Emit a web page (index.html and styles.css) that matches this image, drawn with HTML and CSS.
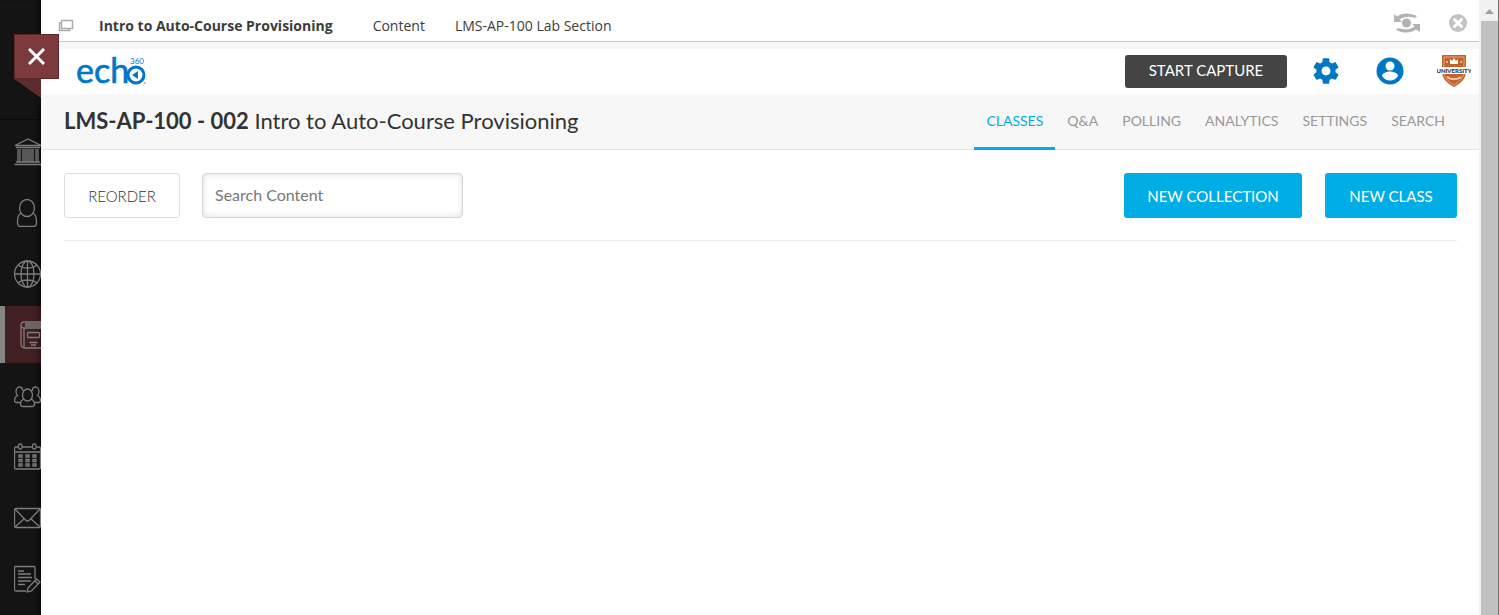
FILE: index.html
```html
<!DOCTYPE html>
<html lang="en">
<head>
    <meta charset="UTF-8">
    <meta name="viewport" content="width=device-width, initial-scale=1.0">
    <title>Intro to Auto-Course Provisioning</title>
    <link rel="stylesheet" href="styles.css">
</head>
<body>
    <nav class="sidebar" aria-label="Main">
        <div class="sidebar-top"></div>
        <a href="#" class="side-link" aria-label="Institution">
            <svg width="28" height="28" viewBox="0 0 28 28">
                <path d="M1 7.500 14 1l13 6.500zM2 9.500h24M4 11v13M6 11v13M9 11v13M11 11v13M13 11v13M15 11v13M17 11v13M19 11v13M22 11v13M24 11v13M2 24h24M.5 26.500h27"/>
            </svg>
        </a>
        <a href="#" class="side-link" aria-label="Profile">
            <svg width="28" height="28" viewBox="0 0 28 28">
                <ellipse cx="13" cy="9" rx="7.500" ry="8.500"/>
                <path d="M7 14c-2 1-3.500 5-3.500 9 0 3 1 4.500 3 4.500h13c2 0 3-1.500 3-4.500 0-4-1.500-8-3.500-9"/>
            </svg>
        </a>
        <a href="#" class="side-link" aria-label="Activity">
            <svg width="28" height="28" viewBox="0 0 28 28">
                <circle cx="13.500" cy="14" r="13"/>
                <ellipse cx="13.500" cy="14" rx="6.500" ry="13"/>
                <path d="M13.500 1v26M.5 14h26M4 5c5 4 14 4 19 0M4 23c5-4 14-4 19 0"/>
            </svg>
        </a>
        <a href="#" class="side-link active" aria-label="Courses">
            <svg width="28" height="28" viewBox="0 0 28 28">
                <path d="M28 1H4C2 1 1 2 1 4v19c0 3 1 4 4 4h23M28 7H4C2 7 1 6 1 4M4 7v20M5 3h23M5 5h23M9.500 21.500h8M11 24h5"/>
                <rect x="7.500" y="11.500" width="12" height="5" rx="1"/>
            </svg>
        </a>
        <a href="#" class="side-link" aria-label="Organizations">
            <svg width="28" height="28" viewBox="0 0 28 28">
                <ellipse cx="13.500" cy="13" rx="5" ry="6"/>
                <path d="M10 17c-2 1-3.500 2-3.500 5 0 1.500 1 2.500 2.500 2.500h9c1.500 0 2.500-1 2.500-2.500 0-3-1.500-4-3.500-5M9 9c-.5-3-1.500-4-3.500-4s-3.500 2-3.500 4.500c0 2 .5 3 1.500 4C1.500 14.500.5 16 .5 18.500c0 1.500.5 2 2 2H7M18 9c.5-3 1.500-4 3.500-4S25 7 25 9.500c0 2-.5 3-1.500 4 2 1 3 2.500 3 5 0 1.500-.5 2-2 2H20"/>
            </svg>
        </a>
        <a href="#" class="side-link" aria-label="Calendar">
            <svg width="28" height="28" viewBox="0 0 28 28">
                <path d="M4.500 4H2C1 4 .5 4.500.5 5.500v19c0 1 .5 1.500 1.500 1.500h23c1 0 1.500-.5 1.500-1.500v-19C26.500 4.500 26 4 25 4h-2.500M8 4h11M.5 9h26"/>
                <rect x="4.500" y="1" width="3.500" height="5" rx="1.500"/>
                <rect x="18.500" y="1" width="3.500" height="5" rx="1.500"/>
                <path d="M5 12h3v2H5zM12 12h3v2h-3zM19 12h3v2h-3zM5 16.500h3v2H5zM12 16.500h3v2h-3zM19 16.500h3v2h-3zM5 21h3v2H5zM12 21h3v2h-3zM19 21h3v2h-3z"/>
            </svg>
        </a>
        <a href="#" class="side-link" aria-label="Messages">
            <svg width="28" height="28" viewBox="0 0 28 28">
                <rect x=".5" y="4.500" width="26" height="19" rx="1.500"/>
                <path d="m1 5 10.500 11c1.500 1.500 2.500 1.500 4 0L26 5M1 23l9.500-8.500M26 23l-9.500-8.500"/>
            </svg>
        </a>
        <a href="#" class="side-link" aria-label="Grades">
            <svg width="28" height="28" viewBox="0 0 28 28">
                <path d="M21 14V3c0-1-.5-1.500-1.500-1.500h-18c-.5 0-1 .5-1 1v22c0 1 .5 1.500 1.500 1.500h10M4 6h6M4 9h13M4 12.500h14M4 16h13M4 19.500h7"/>
                <path d="m14 23 8.500-9 3.500 3-8.500 9-4.500 1zM21 16l3 3"/>
            </svg>
        </a>
    </nav>

    <div class="panel">
        <button class="close-panel" aria-label="Close">
            <svg width="18" height="18" viewBox="0 0 18 18"><path d="m1 1 15 15M16 1 1 16"/></svg>
        </button>
        <div class="ribbon-fold"></div>

        <header class="breadcrumbs">
            <svg class="windows" width="16" height="13" viewBox="0 0 16 13">
                <path d="M4 4H1.500v7.500h10V9"/>
                <path d="M3.500 1.500h11v8h-11z"/>
            </svg>
            <strong class="course-name">Intro to Auto-Course Provisioning</strong>
            <a href="#" class="crumb">Content</a>
            <a href="#" class="crumb">LMS-AP-100 Lab Section</a>
            <div class="panel-tools">
                <button class="icon-button" aria-label="Student preview">
                    <svg width="28" height="20" viewBox="0 0 28 20" fill="#b3b3b3">
                        <circle cx="13.500" cy="10" r="4.500"/>
                        <path d="M1 1v8h8L6.500 6.500C11 3 17 3 22 5l2-2C17-.5 9-.5 4 3.500zM27 19v-8h-8l2.500 2.500C17 17 11 17 5 15l-2 2c7 3.500 15 3.500 20-.5z"/>
                    </svg>
                </button>
                <button class="icon-button" aria-label="Close content">
                    <svg width="18" height="18" viewBox="0 0 18 18">
                        <circle cx="9" cy="9" r="9" fill="#c2c2c2"/>
                        <path d="m5.500 5.500 7 7M12.500 5.500l-7 7" stroke="#fff" stroke-width="3" stroke-linecap="round"/>
                    </svg>
                </button>
            </div>
        </header>

        <div class="brand-bar">
            <a href="#" class="brand" aria-label="echo360">
                <svg width="70" height="30" viewBox="0 0 70 30">
                    <text class="logo-text" x="-1" y="26">ech</text>
                    <circle cx="59" cy="18" r="8" fill="none" stroke="#0077c5" stroke-width="3"/>
                    <path d="m55 18 6-4v8z" fill="#0077c5"/>
                    <text class="logo-small" x="53" y="7">360</text>
                    <circle cx="68" cy="26" r="1" fill="#80bbe2"/>
                </svg>
            </a>
            <div class="brand-tools">
                <button class="capture">START CAPTURE</button>
                <button class="icon-button" aria-label="Settings">
                    <svg width="28" height="28" viewBox="1 1 22 22" fill="#0077c5">
                        <path d="M19.430 12.980c.04-.32.07-.64.07-.98s-.03-.66-.07-.98l2.110-1.650c.19-.15.24-.42.12-.64l-2-3.460c-.12-.22-.39-.3-.61-.22l-2.490 1c-.52-.4-1.080-.73-1.690-.98l-.38-2.650C14.460 2.180 14.250 2 14 2h-4c-.25 0-.46.18-.49.42l-.38 2.650c-.61.25-1.170.59-1.690.98l-2.490-1c-.23-.09-.49 0-.61.22l-2 3.460c-.13.22-.07.49.12.64l2.110 1.650c-.04.32-.07.65-.07.98s.03.66.07.98l-2.110 1.650c-.19.15-.24.42-.12.64l2 3.460c.12.22.39.3.61.22l2.490-1c.52.4 1.080.73 1.690.98l.38 2.650c.03.24.24.42.49.42h4c.25 0 .46-.18.49-.42l.38-2.650c.61-.25 1.170-.59 1.690-.98l2.490 1c.23.09.49 0 .61-.22l2-3.460c.12-.22.07-.49-.12-.64zM12 15.500c-1.930 0-3.500-1.570-3.500-3.500s1.570-3.500 3.500-3.500 3.500 1.570 3.500 3.500-1.570 3.500-3.500 3.500z"/>
                    </svg>
                </button>
                <button class="icon-button" aria-label="Account">
                    <svg width="28" height="28" viewBox="0 0 28 28">
                        <circle cx="14" cy="14" r="13.500" fill="#0077c5"/>
                        <circle cx="14" cy="9" r="4.500" fill="#fff"/>
                        <path d="M6 19c0-3 5-4.500 8-4.500s8 1.500 8 4.500c-2 3-5 4.500-8 4.500S8 22 6 19z" fill="#fff"/>
                    </svg>
                </button>
                <svg class="school" width="34" height="34" viewBox="0 0 34 34">
                    <path d="M5 1h24v16c0 8-5 12-12 16C10 29 5 25 5 17z" fill="#c4622d"/>
                    <path d="M7 3h20v14c0 7-4 10-10 14C11 27 7 24 7 17z" fill="none" stroke="#e3a582"/>
                    <path d="m13 5 2 2 2-3 2 3 2-2v5h-8z" fill="#fff"/>
                    <path d="M9 8h2M23 8h2" stroke="#fff"/>
                    <path d="M10 23c4 3 10 3 14 0" fill="none" stroke="#f0c7b0" stroke-width="2"/>
                    <path d="M0 13h34v7H0z" fill="#fff"/>
                    <text class="school-name" x="17" y="19">UNIVERSITY</text>
                </svg>
            </div>
        </div>

        <div class="course-bar">
            <h1><b>LMS-AP-100 - 002</b> Intro to Auto-Course Provisioning</h1>
            <nav class="tabs" aria-label="Course">
                <a href="#" class="tab current">CLASSES</a>
                <a href="#" class="tab">Q&amp;A</a>
                <a href="#" class="tab">POLLING</a>
                <a href="#" class="tab">ANALYTICS</a>
                <a href="#" class="tab">SETTINGS</a>
                <a href="#" class="tab">SEARCH</a>
            </nav>
        </div>

        <main class="toolbar">
            <button class="button reorder">REORDER</button>
            <input class="search" type="text" placeholder="Search Content" aria-label="Search Content">
            <button class="button primary new-collection">NEW COLLECTION</button>
            <button class="button primary new-class">NEW CLASS</button>
        </main>
    </div>

    <div class="scrollbar">
        <div class="scroll-up"></div>
        <div class="scroll-thumb"></div>
    </div>
</body>
</html>
```

FILE: styles.css
```css
* {
    box-sizing: border-box;
}
body {
    display: flex;
    min-height: 100vh;
    margin: 0;
    background-color: #fff;
    color: #333;
    font-family: Lato, sans-serif;
}
button {
    font-family: inherit;
    cursor: pointer;
}
a {
    color: inherit;
    text-decoration: none;
}
svg {
    display: block;
}

/* dark menu behind the panel */
.sidebar {
    flex: 0 0 41px;
    overflow: hidden;
    background-color: #141414;
    box-shadow: inset -6px 0 6px -4px #0a0a0a;
}
.sidebar-top {
    height: 120px;
    margin-bottom: 3px;
    border-bottom: 1px solid #0a0a0a;
}
.side-link {
    display: flex;
    align-items: center;
    height: 57px;
    margin-bottom: 4px;
    padding-left: 14px;
}
.side-link svg {
    flex: none;
    fill: none;
    stroke: #7c7c7c;
    stroke-width: 1.3;
}
.side-link.active {
    padding-left: 15px;
    border-left: 5px solid #858585;
    background-color: #422022;
    box-shadow: inset -6px 0 6px -4px #2a1011;
}

.panel {
    position: relative;
    flex: 1;
    min-width: 0;
}
.close-panel {
    position: absolute;
    top: 34px;
    left: -27px;
    display: flex;
    align-items: center;
    justify-content: center;
    width: 45px;
    height: 45px;
    padding: 0;
    border: 1px solid #5f2629;
    background-color: #7c3a3c;
}
.close-panel svg {
    fill: none;
    stroke: #fff;
    stroke-width: 3;
}
.ribbon-fold {
    position: absolute;
    top: 79px;
    left: -27px;
    width: 27px;
    height: 19px;
    background-color: #5f2c2e;
    clip-path: polygon(0 0, 100% 0, 100% 100%);
}

.breadcrumbs {
    display: flex;
    align-items: center;
    height: 42px;
    padding: 10px 12px 0 17px;
    border-bottom: 1px solid #c8c8c8;
    color: #3c3c3c;
    font-family: "Open Sans", sans-serif;
    font-size: 14px;
}
.windows {
    margin-right: 25px;
    fill: #fff;
    stroke: #aaa;
    stroke-width: 1.5;
}
.course-name {
    margin-right: 40px;
}
.crumb {
    margin-right: 30px;
}
.panel-tools {
    display: flex;
    align-items: center;
    gap: 28px;
    margin-left: auto;
    padding-bottom: 5px;
}
.icon-button {
    padding: 0;
    border: none;
    background: none;
}

.brand-bar {
    display: flex;
    align-items: center;
    justify-content: space-between;
    height: 52px;
    padding: 0 8px 0 36px;
    border-top: 7px solid #f7f7f7;
}
.brand svg {
    overflow: visible;
}
.logo-text {
    fill: #0077c5;
    stroke: #0077c5;
    stroke-width: 0.6;
    font-size: 34px;
}
.logo-small {
    fill: #0077c5;
    font-size: 8px;
}
.brand-tools {
    display: flex;
    align-items: center;
    padding-bottom: 1px;
}
.brand-tools .icon-button {
    margin-left: 25px;
}
.brand-tools .icon-button + .icon-button {
    margin-left: 36px;
}
.capture {
    width: 162px;
    height: 33px;
    padding: 0 0 2px;
    border: none;
    border-radius: 3px;
    background-color: #444;
    color: #fff;
    font-size: 15px;
}
.school {
    margin-left: 33px;
}
.school-name {
    fill: #203445;
    font-size: 6px;
    font-weight: 900;
    text-anchor: middle;
}

.course-bar {
    display: flex;
    justify-content: space-between;
    height: 56px;
    padding: 0 22px 0 23px;
    border-bottom: 1px solid #e4e4e4;
    background-color: #f7f7f7;
}
h1 {
    margin: 0;
    font-size: 22px;
    font-weight: 400;
    line-height: 54px;
    white-space: nowrap;
}
.tabs {
    display: flex;
}
.tab {
    height: 56px;
    padding: 0 12px;
    color: #999;
    font-size: 14px;
    line-height: 54px;
}
.tab.current {
    border-bottom: 3px solid #00aee5;
    color: #00aee5;
}

.toolbar {
    display: flex;
    margin: 0 22px 0 23px;
    padding: 23px 0 22px;
    border-bottom: 1px solid #ececec;
}
.button {
    height: 45px;
    padding: 0;
    border: 1px solid #ddd;
    border-radius: 3px;
    background-color: #fff;
    color: #333;
    font-size: 15px;
}
.reorder {
    width: 116px;
    margin-right: 22px;
    font-weight: 300;
}
.search {
    width: 261px;
    height: 45px;
    padding: 0 12px 3px;
    border: 1px solid #d5d5d5;
    border-radius: 4px;
    box-shadow: inset 0 0 6px #ddd;
    font-family: inherit;
    font-size: 16px;
}
.search::placeholder {
    color: #777;
}
.primary {
    border: none;
    background-color: #00aee5;
    color: #fff;
}
.new-collection {
    width: 178px;
    margin-left: auto;
}
.new-class {
    width: 132px;
    margin-left: 23px;
}

.scrollbar {
    display: flex;
    flex: 0 0 20px;
    flex-direction: column;
    padding-left: 2px;
    border-right: 1px solid #707070;
    background-color: #f1f1f1;
}
.scroll-up {
    width: 9px;
    height: 5px;
    margin: 9px 4px 7px;
    background-color: #a0a0a0;
    clip-path: polygon(50% 0, 100% 100%, 0 100%);
}
.scroll-thumb {
    flex: 1;
    background-color: #c1c1c1;
}
```
